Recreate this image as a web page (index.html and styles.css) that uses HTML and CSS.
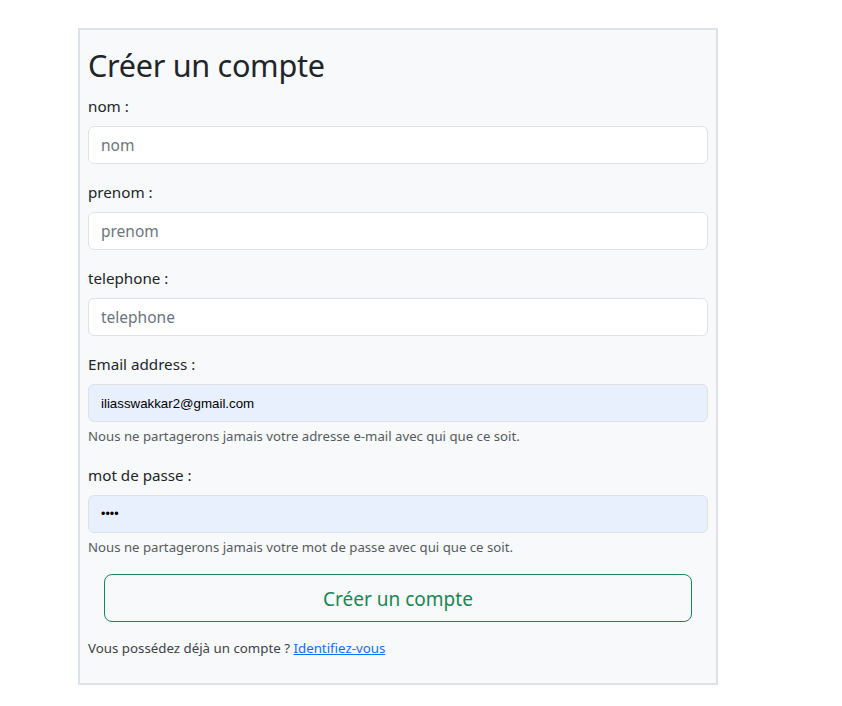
FILE: index.html
```html
<!DOCTYPE html>
<html lang="fr">
<head>
<meta charset="utf-8">
<title>Créer un compte</title>
<link rel="stylesheet" href="styles.css">
</head>
<body>
<div class="page">
  <form class="card">
    <h1 class="title">Créer un compte</h1>
    <div class="group">
      <label class="label" for="nom">nom :</label>
      <input class="input" id="nom" type="text" placeholder="nom">
    </div>
    <div class="group">
      <label class="label" for="prenom">prenom :</label>
      <input class="input" id="prenom" type="text" placeholder="prenom">
    </div>
    <div class="group">
      <label class="label" for="tel">telephone :</label>
      <input class="input" id="tel" type="text" placeholder="telephone">
    </div>
    <div class="group">
      <label class="label" for="email">Email address :</label>
      <input class="input autofill" id="email" type="email" value="iliasswakkar2@gmail.com">
      <div class="help">Nous ne partagerons jamais votre adresse e-mail avec qui que ce soit.</div>
    </div>
    <div class="group">
      <label class="label" for="pwd">mot de passe :</label>
      <input class="input autofill pwd" id="pwd" type="password" value="abcd">
      <div class="help">Nous ne partagerons jamais votre mot de passe avec qui que ce soit.</div>
    </div>
    <div class="actions">
      <button class="btn" type="button">Créer un compte</button>
    </div>
    <p class="foot">Vous possédez déjà un compte ? <a href="#" class="link">Identifiez-vous</a></p>
  </form>
</div>
</body>
</html>
```

FILE: styles.css
```css
* { box-sizing: border-box; }
html, body { margin: 0; padding: 0; background: #fff; }
body {
  font-family: "Noto Sans", "Open Sans", sans-serif;
  color: #212529;
  font-size: 16px;
  line-height: 1.5;
}
.page {
  padding: 28px 0 0 78px;
}
.card {
  width: 640px;
  background: #f8f9fa;
  border: 2px solid #dee2e6;
  padding: 8px;
  display: flex;
  flex-direction: column;
}
.title {
  font-weight: 400;
  font-size: 30.6px;
  line-height: 40px;
  margin: 7px 0 9px;
  letter-spacing: -0.3px;
}
.group {
  margin-bottom: 16px;
  display: flex;
  flex-direction: column;
}
.label {
  font-size: 15.2px;
  line-height: 24px;
  margin-bottom: 8px;
}
.input {
  display: block;
  width: 100%;
  height: 38px;
  padding: 6px 12px;
  font-family: inherit;
  font-size: 15.5px;
  color: #212529;
  background: #fff;
  border: 1px solid #dee2e6;
  border-radius: 6px;
  outline: none;
}
.input::placeholder { color: #6c757d; opacity: 1; }
.autofill {
  background: #e8f0fe;
  font-family: "Liberation Sans", Arial, sans-serif;
  font-size: 13.3px;
  color: #000;
}
.pwd { font-size: 12.5px; }
.help {
  margin-top: 4px;
  font-size: 13.2px;
  line-height: 21px;
  color: #555b61;
}
.actions {
  display: flex;
  padding: 0 16px;
  margin-bottom: 16px;
}
.btn {
  flex: 1;
  height: 48px;
  padding-top: 3px;
  font-family: inherit;
  font-size: 19px;
  color: #198754;
  background: transparent;
  border: 1px solid #198754;
  border-radius: 8px;
  cursor: pointer;
}
.foot {
  margin: 0 0 16px;
  font-size: 13.3px;
  line-height: 21px;
  color: #3d4247;
}
.link { color: #0d6efd; text-decoration: underline; }
```
